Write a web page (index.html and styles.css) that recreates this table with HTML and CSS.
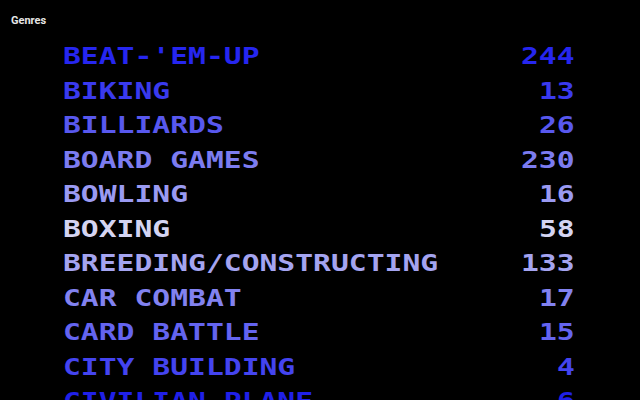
FILE: index.html
```html
<!DOCTYPE html>
<html>
<head>
<meta charset="utf-8">
<link rel="stylesheet" href="styles.css">
</head>
<body>
<div class="screen">
  <div class="title">Genres</div>
  <ul class="list">
    <li class="row c1"><span class="name">BEAT-'EM-UP</span><span class="count">244</span></li>
    <li class="row c2"><span class="name">BIKING</span><span class="count">13</span></li>
    <li class="row c3"><span class="name">BILLIARDS</span><span class="count">26</span></li>
    <li class="row c4"><span class="name">BOARD GAMES</span><span class="count">230</span></li>
    <li class="row c5"><span class="name">BOWLING</span><span class="count">16</span></li>
    <li class="row c6"><span class="name">BOXING</span><span class="count">58</span></li>
    <li class="row c7"><span class="name">BREEDING/CONSTRUCTING</span><span class="count">133</span></li>
    <li class="row c8"><span class="name">CAR COMBAT</span><span class="count">17</span></li>
    <li class="row c9"><span class="name">CARD BATTLE</span><span class="count">15</span></li>
    <li class="row c10"><span class="name">CITY BUILDING</span><span class="count">4</span></li>
    <li class="row c11"><span class="name">CIVILIAN PLANE</span><span class="count">6</span></li>
  </ul>
</div>
</body>
</html>
```
FILE: styles.css
```css
html, body {
  margin: 0;
  padding: 0;
  background: #000;
}
.screen {
  width: 640px;
  height: 400px;
  overflow: hidden;
  background: #000;
}
.title {
  padding: 14px 0 0 11px;
  height: 14px;
  font-family: Roboto, "Liberation Sans", sans-serif;
  font-weight: 700;
  font-size: 11px;
  line-height: 14px;
  color: #e6e6e6;
}
.list {
  list-style: none;
  margin: 11px 0 0 0;
  padding: 0 65px 0 63px;
}
.row {
  display: flex;
  justify-content: space-between;
  height: 34.56px;
  line-height: 34.56px;
  font-family: "DejaVu Sans Mono", monospace;
  font-weight: 700;
  font-size: 23px;
  white-space: nowrap;
}
.name {
  display: inline-block;
  transform: scaleX(1.29);
  transform-origin: left center;
}
.count {
  display: inline-block;
  transform: scaleX(1.29);
  transform-origin: right center;
}
.c1 { color: #2626f0; }
.c2 { color: #3a3aee; }
.c3 { color: #5858ee; }
.c4 { color: #7c7cf0; }
.c5 { color: #9a9af2; }
.c6 { color: #d4d4f2; }
.c7 { color: #a4a4f0; }
.c8 { color: #8282f0; }
.c9 { color: #6464f0; }
.c10 { color: #4444f0; }
.c11 { color: #2020e8; }
```
